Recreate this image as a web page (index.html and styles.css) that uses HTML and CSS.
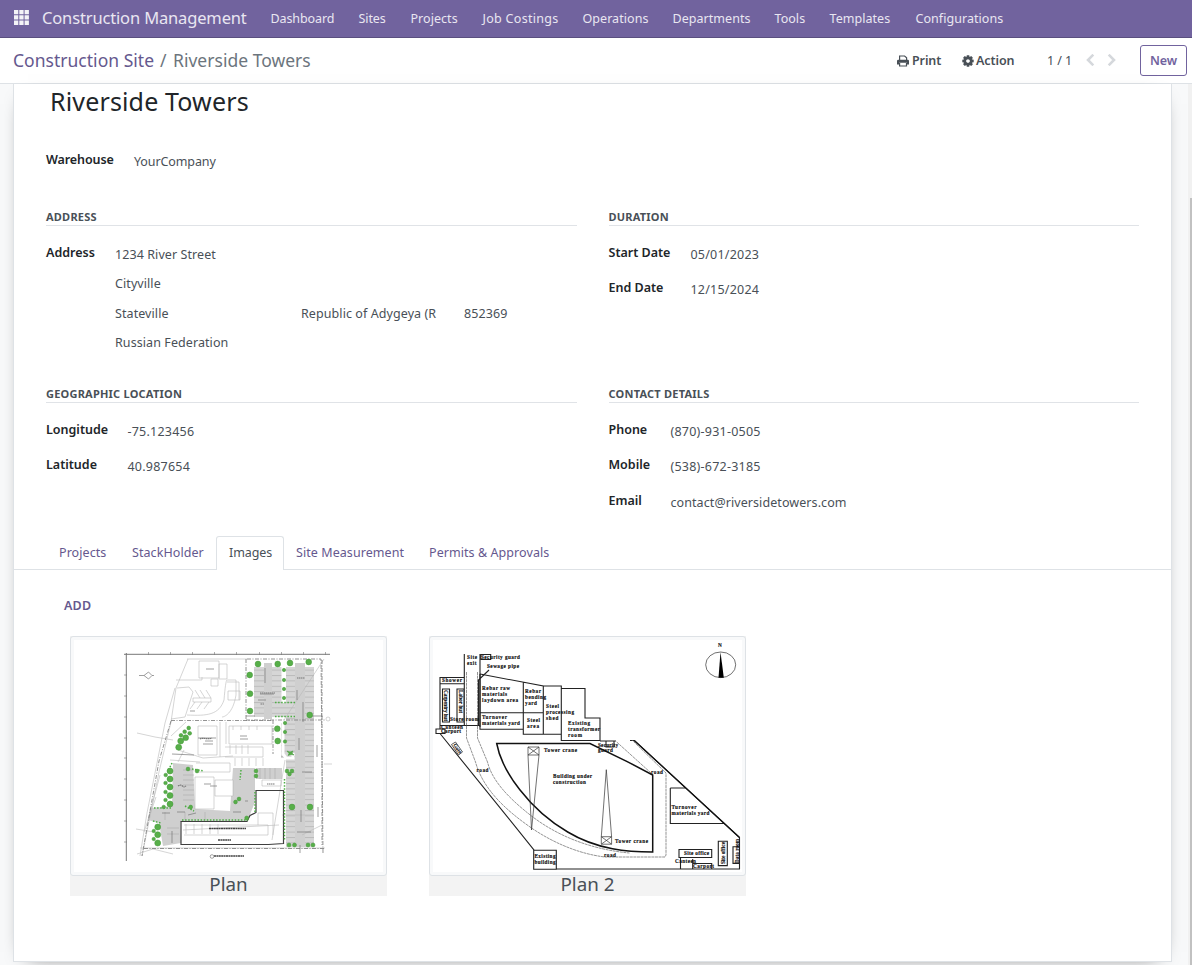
FILE: index.html
```html
<!DOCTYPE html>
<html lang="en">
<head>
<meta charset="utf-8">
<title>Riverside Towers</title>
<link rel="stylesheet" href="styles.css">
</head>
<body>
<header class="navbar">
  <svg class="apps" width="15" height="15" viewBox="0 0 15 15" fill="#fff" fill-opacity=".92"><path d="M0 0h4.3v4.3H0zM5.3 0h4.3v4.3H5.3zM10.6 0h4.3v4.3h-4.3zM0 5.3h4.3v4.3H0zM5.3 5.3h4.3v4.3H5.3zM10.6 5.3h4.3v4.3h-4.3zM0 10.6h4.3v4.3H0zM5.3 10.6h4.3v4.3H5.3zM10.6 10.6h4.3v4.3h-4.3z"/></svg>
  <span class="brand">Construction Management</span>
  <nav class="menu"><span>Dashboard</span><span>Sites</span><span class="wide">Projects</span><span class="wider">Job Costings</span><span class="wide">Operations</span><span class="wide">Departments</span><span class="wide">Tools</span><span class="wide">Templates</span><span class="wide">Configurations</span></nav>
</header>
<section class="control">
  <div class="crumbs"><a>Construction Site</a><span class="slash">/</span><span>Riverside Towers</span></div>
  <div class="tools">
    <span class="tool print"><svg width="12" height="12" viewBox="0 0 12 12"><path d="M2.6 5V1h5l2 1.7V5" fill="none" stroke="#495057" stroke-width="1.2"/><path d="M1.4 4.7h9.4q1.2 0 1.2 1.2V9.6H10V7.8H2v1.8H0V5.9q0-1.2 1.4-1.2z" fill="#495057"/><path d="M2.6 8v3h6.9V8" fill="none" stroke="#495057" stroke-width="1.2"/></svg>Print</span>
    <span class="tool action"><svg width="12" height="12" viewBox="-6 -6 12 12"><g fill="#495057"><path id="t" d="M-1.2-5.7h2.4l.5 2.5h-3.4z"/><use href="#t" transform="rotate(45)"/><use href="#t" transform="rotate(90)"/><use href="#t" transform="rotate(135)"/><use href="#t" transform="rotate(180)"/><use href="#t" transform="rotate(225)"/><use href="#t" transform="rotate(270)"/><use href="#t" transform="rotate(315)"/></g><circle r="3.1" fill="none" stroke="#495057" stroke-width="2.5"/></svg>Action</span>
    <span class="pager">1 / 1</span>
    <svg class="prev" width="9" height="12" viewBox="0 0 9 12"><path d="M7.3 .7 2 6l5.300 5.300" fill="none" stroke="#d5d8dc" stroke-width="2.6"/></svg>
    <svg class="next" width="9" height="12" viewBox="0 0 9 12"><path d="m1.700 .7 5.300 5.300-5.300 5.300" fill="none" stroke="#d5d8dc" stroke-width="2.6"/></svg>
    <button class="new">New</button>
  </div>
</section>
<main class="content">
  <article class="sheet">
    <div class="form">
      <h1>Riverside Towers</h1>
      <div class="row warehouse"><b>Warehouse</b><span>YourCompany</span></div>
      <div class="groups">
        <section class="address">
          <h2>ADDRESS</h2>
          <div class="row"><b>Address</b>
            <div class="lines"><span>1234 River Street</span><span>Cityville</span><div class="state"><span>Stateville</span><span>Republic of Adygeya (R</span><span>852369</span></div><span>Russian Federation</span></div>
          </div>
        </section>
        <section class="duration">
          <h2>DURATION</h2>
          <div class="row"><b>Start Date</b><span class="num">05/01/2023</span></div>
          <div class="row"><b>End Date</b><span class="num">12/15/2024</span></div>
        </section>
        <section class="geo">
          <h2>GEOGRAPHIC LOCATION</h2>
          <div class="row"><b>Longitude</b><span class="num">-75.123456</span></div>
          <div class="row"><b>Latitude</b><span class="num">40.987654</span></div>
        </section>
        <section class="contact">
          <h2>CONTACT DETAILS</h2>
          <div class="row"><b>Phone</b><span class="num">(870)-931-0505</span></div>
          <div class="row"><b>Mobile</b><span class="num">(538)-672-3185</span></div>
          <div class="row"><b>Email</b><span class="mail">contact@riversidetowers.com</span></div>
        </section>
      </div>
    </div>
    <div class="tabs"><span class="t1">Projects</span><span class="t2">StackHolder</span><span class="t3 active">Images</span><span class="t4">Site Measurement</span><span class="t5">Permits &amp; Approvals</span></div>
    <div class="add">ADD</div>
    <div class="gallery">
      <figure>
        <div class="thumb">
          <svg width="309" height="232" viewBox="74 640 309 232">
            <defs>
              <pattern id="bays" width="14" height="5.4" patternUnits="userSpaceOnUse"><rect width="14" height="5.4" fill="#d6d6d6"/><path d="M0 .5h14" stroke="#a0a0a0" stroke-width=".5"/></pattern>
            </defs>
            <g fill="url(#bays)"><path d="M254 667h28v50h-28zM286 667h28v180h-28zM281 723h7v35h-7zM273 703h22v14h-22z"/></g>
            <g fill="#cfcfcf"><path d="M295 663h10v184h-10zM264 663h8v56h-8zM173 763l20 2 2 44 35 2 3-43h22v34l-8 20h-67l1 21-18 3-4-23-11-3 2-12 22-2zM256 768h26v11h-26z"/></g>
            <path d="M183 770h11M183 775h11M183 780h11M183 785h11M183 790h11M183 795h11M183 800h11M260 768v11M265 768v11M270 768v11M275 768v11M165 812v8M185 812v8M205 812v8M167 828h12M167 834h12" fill="none" stroke="#a0a0a0" stroke-width=".5"/>
            <path d="M195 777h19v32h-19zM215 780h18v16h-18zM262 780h19v6h-19z" fill="#fff" stroke="#aaa" stroke-width=".5"/>
            <path d="M283 667v35M283 720v34l3 4h7v-5" stroke="#fff" stroke-width="3" fill="none"/>
            <g fill="none" stroke="#777" stroke-width="1"><path d="M126.300 653v208M124 654.300h206"/><path d="M148.500 652v3M170.500 652v3M192.500 652v3M214.500 652v3M236.500 652v3M259.500 652v3M281.500 652v3M303.500 652v3M325.500 652v3M124 675h3M124 696h3M124 717h3M124 738h3M124 758h3M124 779h3M124 800h3M124 821h3M124 842h3" stroke-width=".6"/></g>
            <g fill="none" stroke="#b9b9b9" stroke-width=".6">
              <path d="M188 659 176 688l-5 34-12 50-17 84M177 688l12-1 4 5-8 25-14 2M187 659h60M175 688l-10 35-18 90-7 43M199 661h20v17h-20zM219 664h8v15h-8zM211 679h7v7h-7zM176 680h26v-3M193 698h18v4h-18zM195 690l5 8M200 690l5 8M206 690l5 8M190 709l5-7M197 709l5-7M204 709l5-7M187 715c20 1 32 0 37-15 1-12 2-20 3-20h9v15c-3 19-12 22-14 22M227 682h12v18M228 691h12v9h-12zM137 733l18 4 18 3M198 726h19v29h-19zM229 726h43v18h-43zM220 722v35M226 722v22M171 736l15-14M178 750l25 8 30-2M225 747h38v10h-38M183 830l96-5M184 825h84v10h-84M258 825v-12h15v22M272 840l13-80M284 720l40-61M282 815l32 0M302 835l20-10M140 848h185M154 832l-18-3M137 854l16-5 20 5"/>
              <path d="M186 824v10M194 824v10M202 824v10M210 824v10M218 824v10M230 745v9M236 745v9M242 745v9M248 745v9M233 726v4M241 726v4M249 726v4M257 726v4"/>
              <path d="M196 763h34v9h-34M170 760l30 2M178 762l6-12M235 758v8M242 758v8M249 758v8M256 758v8M263 758v8M330 719a2 2 0 1 0-4 0 2 2 0 0 0 4 0M324 764h8M156 797l-12 35M160 775l-12 45"/>
            </g>
            <g fill="none" stroke="#777" stroke-width=".8" stroke-dasharray="4 1.5 1 1.500"><path d="M247 659h74l2 194M246 659v61M171 720.500h101M171 721l-12 40-17 95M144 848.500h180M273 720v34M246 720h80M322 660v185"/></g>
            <path d="M139 675.500h5M144 675.500l4.500-3.500 3.500 3.500-3.500 3.500zM152 675.500h2M206 669h8M205 741h8M203 744h10M198 738h18M190 711h5M172 754l22 1M210 786h7M204 784h7M240 736h7M240 739h8M245 801h3M297 690v10M303 702v20M299 738v12M301 810v12M265 668v15M260 694h14M258 700h8M246 716h9M302 772h10M297 832h14M233 812h8M177 812h8M188 815l8-2M162 813h8M172 843v-12M300 845v8M317 745v12M318 807v10M311 716h12" stroke="#777" stroke-width=".7" fill="none"/>
            <path d="M200 739c3-2 7 1 12-1M260 693l15 0M297 678h8M264 704l-4 0M267 784h8M178 786c5-3 4 3 8 0" stroke="#777" stroke-width="1.2" fill="none" stroke-dasharray="1.500 .5"/>
            <path d="M209 828.500h37M218 840h13M214 856h30" stroke="#444" stroke-width="1.300" stroke-dasharray="2 .4" fill="none"/><circle cx="212" cy="856.500" r="1.800" fill="none" stroke="#666" stroke-width=".6"/>
            <path d="M181 821.500h66l3-6 6-3v-22h27.500v53l-15 1H181z" fill="none" stroke="#3f3f3f" stroke-width="1.200"/>
            <g fill="none" stroke="#4cae43" stroke-width="1.500" stroke-dasharray="1.500 1.600"><path d="M275 702.500h20M275 716.500h20M154 808h18M185 806l9 5M192 769l12 2M182 820h66M255 812v-22M284.500 779v62M241 770l-1 10M153 821l8 2M172 763l-3 6"/></g>
            <g fill="#57af49" stroke="#45963a" stroke-width=".5">
              <circle cx="258" cy="664" r="2.900"/><circle cx="277.700" cy="664" r="2.900"/><circle cx="290" cy="663" r="2.900"/><circle cx="308.700" cy="662" r="2.900"/><circle cx="249.700" cy="675" r="2.900"/><circle cx="250" cy="693.700" r="2.900"/><circle cx="250" cy="711" r="2.900"/><circle cx="309.700" cy="715" r="2.900"/><circle cx="277.300" cy="728.700" r="2.900"/><circle cx="277.700" cy="741" r="2.900"/>
              <circle cx="284" cy="670" r="1.700"/><circle cx="284" cy="680" r="1.700"/><circle cx="284" cy="689" r="1.700"/><circle cx="284" cy="698" r="1.700"/><circle cx="285" cy="723" r="1.700"/><circle cx="285" cy="732" r="1.700"/><circle cx="285" cy="741.500" r="1.700"/>
              <path d="m287 751 3 1 3-1-1 2 2 2-3-.5-3 1 1-2z"/>
              <circle cx="256" cy="771" r="1.900"/><circle cx="256" cy="776" r="1.900"/><circle cx="287" cy="771" r="1.900"/><circle cx="292" cy="771" r="1.900"/><circle cx="289.500" cy="774" r="1.900"/><circle cx="292" cy="807" r="2.900"/><circle cx="310" cy="807" r="2.900"/><circle cx="289" cy="845" r="2"/><circle cx="294.500" cy="845" r="2"/><circle cx="308" cy="845" r="2"/><circle cx="313" cy="845" r="2"/><circle cx="235.500" cy="802" r="1.900"/><circle cx="239" cy="799" r="1.900"/><circle cx="246.700" cy="818" r="2"/>
              <circle cx="170" cy="771" r="3"/><circle cx="170" cy="779" r="3"/><circle cx="170" cy="787" r="3"/><circle cx="170" cy="795.500" r="3"/><circle cx="170" cy="804" r="3"/><circle cx="165.700" cy="775" r="1.800"/><circle cx="165.500" cy="783" r="1.800"/><circle cx="165.500" cy="792" r="1.800"/><circle cx="165.500" cy="800" r="1.800"/><circle cx="163.700" cy="807" r="1.800"/><circle cx="190.700" cy="807" r="1.900"/><circle cx="188" cy="769" r="1.900"/><circle cx="197" cy="771" r="1.900"/><circle cx="157.700" cy="827" r="3"/><circle cx="157.700" cy="834.700" r="3"/><circle cx="157.700" cy="843" r="3"/><circle cx="153.700" cy="831" r="1.700"/><circle cx="153.700" cy="839" r="1.700"/>
              <circle cx="188.700" cy="728" r="1.900"/><circle cx="184.700" cy="731.700" r="1.900"/><circle cx="189.700" cy="733.300" r="1.900"/><circle cx="185.700" cy="737.700" r="2.900"/><circle cx="181" cy="735.300" r="1.900"/><circle cx="180.700" cy="741" r="3"/><circle cx="178.700" cy="747.300" r="3"/>
            </g>
          </svg>
        </div>
        <figcaption>Plan</figcaption>
      </figure>
      <figure>
        <div class="thumb">
          <svg width="309" height="232" viewBox="433 640 309 232">
            <g fill="none" stroke="#222" stroke-width="1.100">
              <path d="M464.300 654v72M480 654v73M464 677.500h-24v52M440 683.700h24M442.500 689h7v33h-7zM457 689h7v33h-7zM440 725.500h40M436 729h9v4.500h-9zM489 670l-10.500 10v46"/>
              <path d="M480.700 654.500h10v5h-10z"/>
              <path d="M480 674l63.300 12v48.300M480 674v55.300h43.300M523.300 682v52.300h38V686h-18M480 712.700h63.300M561.300 688.500H585V718h15v22.500h-38.700z"/>
              <path d="m440 733.500 94.300 116.800M533.700 850.300h22.600v19h-22.600zM556 869h183.500v-31.500L634.300 740.500H630M670.300 788H686M670.300 788v35.500H724M600 741h16M606 741h8v6h-8zM679 849.500h32.700v8H679zM692.700 863.500h19v5.500M680.500 858v11M692.700 859v10M718.300 841.300h9v24.300h-9zM733 846.700h6.500v16.700H733z"/>
            </g>
            <path d="M496.700 743.500H590l36.700 17.800 26 13.700v77c-24 0-55-2-85-20-38-22-66-61-71-88.500z" fill="none" stroke="#111" stroke-width="1.500"/>
            <path d="m634.300 740.500 105.200 97" fill="none" stroke="#111" stroke-width="1.300"/>
            <g fill="none" stroke="#666" stroke-width=".7">
              <path d="M466.500 672v66l9 24c8 29 33 50 56 66 22 15 48 26 73.500 29h60l1-2v-82l-34-33" stroke-dasharray="3 .6"/>
              <path d="M477.500 672v66l10 24c5 21 26 40 44 54 30 23 65 34 98 37M616.700 742l34.300 31" stroke-dasharray="3 .6"/>
              <path d="M528 747h11v8h-11zM528 747l11 8M539 747l-11 8 3.500 75 7.500-75M601.300 836.700h10.300v7.500h-10.300zM601.300 836.700l10.300 7.500M611.600 836.700l-10.300 7.500M601.300 836.700l5-67 5.300 67" stroke="#333"/>
              <ellipse cx="720.700" cy="664.800" rx="15" ry="12.800" stroke="#333"/>
            </g>
            <path d="m720.500 652 3.300 25.700h-5.300z"/>
            <path d="m451.500 744.500 4-2.500 7 10-4 3z" fill="none" stroke="#333" stroke-width=".8"/>
            <g class="plan-text">
              <text x="467" y="659" textLength="10">Site</text><text x="467" y="665" textLength="9.500">exit</text><text x="481" y="659" textLength="39">Security guard</text><text x="487" y="668" textLength="32">Sewage pipe</text><text x="442" y="682" textLength="20">Shower</text>
              <text x="482" y="690.300" textLength="28">Rebar raw</text><text x="482" y="696.300" textLength="25">materials</text><text x="482" y="702.300" textLength="36">laydown area</text><text x="482" y="719.300" textLength="25">Turnover</text><text x="482" y="725.300" textLength="38">materials yard</text>
              <text x="525" y="692.500" textLength="16">Rebar</text><text x="525" y="698.500" textLength="21">bending</text><text x="525" y="704.500" textLength="12">yard</text><text x="527" y="721.500" textLength="13">Steel</text><text x="527" y="727.500" textLength="12">area</text>
              <text x="546" y="707.800" textLength="13">Steel</text><text x="546" y="714" textLength="28">processing</text><text x="546" y="720" textLength="12.500">shed</text><text x="568" y="725" textLength="22">Existing</text><text x="568" y="731" textLength="32">transformer</text><text x="568" y="737" textLength="14">room</text>
              <text x="450" y="720.800" textLength="29">Store room</text><text x="441" y="728.800" textLength="22">Canteen</text><text x="441" y="733" textLength="20">Carport</text>
              <text x="544" y="752" textLength="33">Tower crane</text><text x="598" y="746.500" textLength="20">Security</text><text x="598" y="752" textLength="15">guard</text><text x="476.500" y="771.500" textLength="12">road</text><text x="553" y="778.300" textLength="39">Building under</text><text x="553" y="784.300" textLength="33">construction</text><text x="651" y="774" textLength="12">road</text><text x="604" y="857.300" textLength="12">road</text><text x="615" y="843.300" textLength="33">Tower crane</text>
              <text x="671.500" y="809" textLength="25">Turnover</text><text x="671.500" y="815" textLength="38">materials yard</text><text x="684" y="855.300" textLength="25">Site office</text><text x="675" y="863" textLength="21">Canteen</text><text x="693" y="868.300" textLength="21">Carport</text><text x="534.500" y="858.300" textLength="21">Existing</text><text x="534.500" y="864.300" textLength="21">building</text><text x="718" y="647">N</text>
              <text transform="translate(444 690) rotate(90)" textLength="31">Carpentry hut</text><text transform="translate(459 690) rotate(90)" textLength="23">Labor hut</text><text transform="translate(725 864) rotate(-90)" textLength="22">Site office</text><text transform="translate(738.500 863) rotate(-90)" textLength="24">Data room</text><text transform="translate(453 745) rotate(55)" textLength="11">Gate</text>
            </g>
          </svg>
        </div>
        <figcaption>Plan 2</figcaption>
      </figure>
    </div>
  </article>
  <div class="scroll"><i></i></div>
</main>
</body>
</html>
```
FILE: styles.css
```css
* { box-sizing: border-box; }
body { margin: 0; height: 965px; overflow: hidden; display: flex; flex-direction: column; font: 12.5px/20px "Noto Sans", sans-serif; letter-spacing: -.1px; color: #495057; background: #fff; }
svg { display: block; flex: none; }
.navbar { flex: none; height: 38px; background: #71639e; border-bottom: 1px solid #5a4f7f; display: flex; align-items: center; padding-left: 14px; color: #e9e6f1; }
.apps { margin: -3px 13px 0 0; }
.brand { width: 229px; margin-top: -2px; font-size: 16.5px; letter-spacing: -.15px; white-space: nowrap; }
.menu { display: grid; grid-template-columns: 88px 52px 72px 100px 90px 102px 55px 86px 90px; margin-left: -.5px; white-space: nowrap; }
.menu .wide { letter-spacing: .05px; }
.menu .wider { letter-spacing: .3px; }
.control { flex: none; height: 46px; border-bottom: 1px solid #dee2e6; display: flex; align-items: center; justify-content: space-between; padding: 0 5px 0 13px; }
.crumbs { display: flex; margin-top: -2px; font-size: 17.5px; letter-spacing: .02px; color: #6c757d; white-space: nowrap; }
.crumbs a { color: #65588e; width: 147px; }
.slash { width: 13px; }
.tools { display: flex; align-items: center; }
.tool { display: flex; align-items: center; gap: 4px; font-weight: 600; white-space: nowrap; }
.tool svg { margin-top: 1px; }
.print { width: 65px; gap: 3px; }
.action { width: 85px; gap: 2px; }
.pager { width: 39px; }
.prev { margin: -1px 12px 0 0; }
.next { margin: -1px 24px 0 0; }
.new { width: 47px; height: 31px; padding: 0; border: 1px solid #71639e; border-radius: 3px; background: #fff; color: #71639e; font: 600 12.5px/20px "Noto Sans", sans-serif; letter-spacing: -.1px; }
.content { flex: 1; min-height: 0; display: flex; justify-content: space-between; background: #f8f9fa; padding-left: 13px; }
.sheet { width: 1159px; height: 878px; background: #fff; border: 1px solid #dee2e6; border-top: 0; box-shadow: 0 5px 20px -15px #000; }
.scroll { width: 4px; background: #f1f1f1; padding: 114px 0 0 2px; }
.scroll i { display: block; height: 767px; background: #c1c1c1; }
.form { padding: 0 32px; height: 452px; }
h1 { margin: 0 0 0 4px; height: 66px; font-size: 25px; line-height: 35px; font-weight: 400; letter-spacing: .15px; color: #212529; }
.row { display: flex; height: 35.400px; white-space: nowrap; }
.row b { font-weight: 600; letter-spacing: 0; color: #212529; }
.row > span, .lines { margin-top: 2px; }
.lines, .mail { letter-spacing: .08px; }
.row > .num { letter-spacing: .22px; }
.warehouse { height: 56px; }
.warehouse b { width: 88px; letter-spacing: -.1px; }
.groups { display: grid; grid-template-columns: 531px 530px; column-gap: 31.500px; grid-template-rows: 177px 153px; }
h2 { margin: 0 0 17px; height: 20px; padding-top: 3px; border-bottom: 1px solid #e0e3e7; font-size: 11px; line-height: 16px; font-weight: 700; letter-spacing: .22px; color: #495057; }
.address b { width: 69px; }
.duration b { width: 82px; }
.geo b { width: 81.500px; }
.contact b { width: 62px; }
.lines { display: grid; grid-template-rows: repeat(4, 29.400px); }
.state { display: grid; grid-template-columns: 186px 163px 60px; }
.tabs { height: 34px; display: flex; border-bottom: 1px solid #dee2e6; padding-left: 45px; color: #65588e; line-height: 33px; letter-spacing: .07px; white-space: nowrap; }
.t1 { width: 73px; }
.t2 { width: 84px; }
.active { width: 68px; height: 34px; padding-left: 12px; border: 1px solid #dee2e6; border-bottom: 0; border-radius: 3px 3px 0 0; background: #fff; color: #495057; line-height: 32px; letter-spacing: -.1px; }
.t4 { padding-left: 12px; width: 145px; }
.add { margin: 26px 0 20px 50px; height: 20px; font-weight: 600; letter-spacing: .2px; color: #65588e; }
.gallery { display: flex; gap: 42px; padding-left: 56px; }
figure { margin: 0; width: 317px; background: #f3f3f3; }
.thumb { height: 240px; padding: 3px; border: 1px solid #dee2e6; border-radius: 3px; background: #f8f9fa; }
.thumb svg { background: #fff; }
figcaption { height: 20px; text-align: center; font-size: 18.800px; line-height: 17px; letter-spacing: 0; }
.plan-text { font: bold 5.200px "Liberation Serif", serif; letter-spacing: 0; fill: #111; stroke: #111; stroke-width: .15px; }
```
